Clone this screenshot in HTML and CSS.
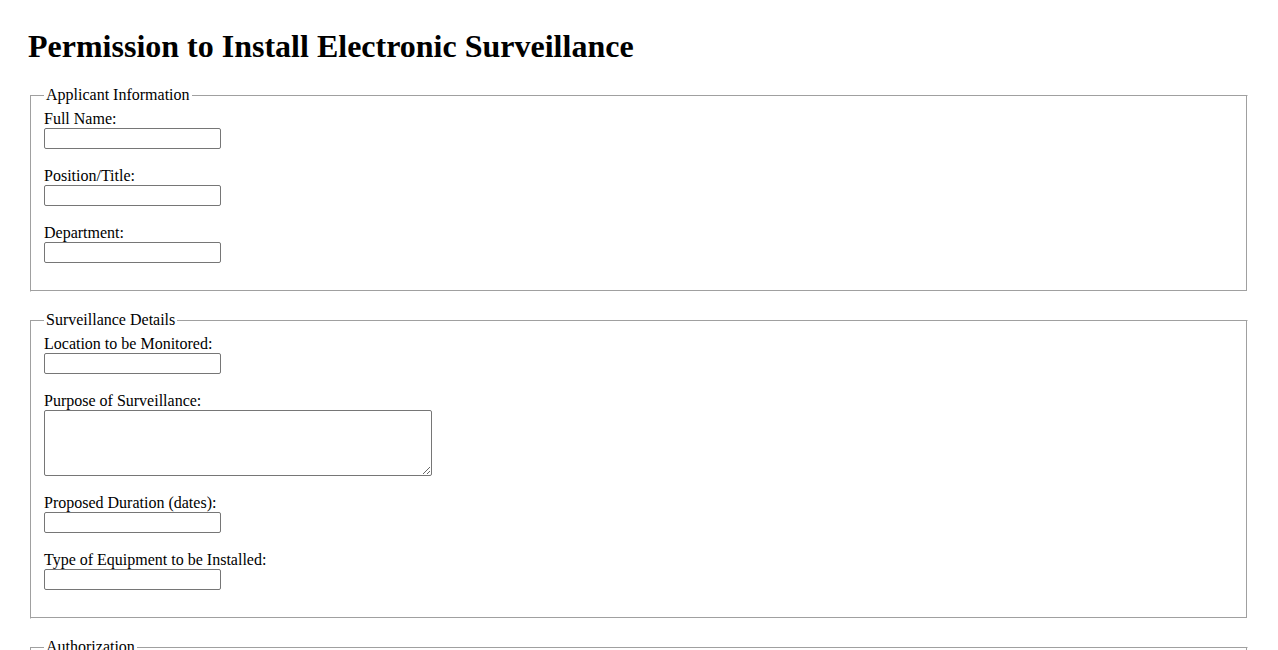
FILE: index.html
```html
<!DOCTYPE html>
<html lang="en">
<head>
<meta charset="utf-8">
<title>Permission to Install Electronic Surveillance</title>
<link rel="stylesheet" href="styles.css">
</head>
<body>
<div class="page">
  <h1 class="title">Permission to Install Electronic Surveillance</h1>
  <form class="form">
    <fieldset class="group">
      <legend class="group-legend">Applicant Information</legend>
      <div class="field">
        <label class="field-label" for="fullname">Full Name:</label>
        <input class="text-input" type="text" id="fullname">
      </div>
      <div class="field">
        <label class="field-label" for="position">Position/Title:</label>
        <input class="text-input" type="text" id="position">
      </div>
      <div class="field">
        <label class="field-label" for="department">Department:</label>
        <input class="text-input" type="text" id="department">
      </div>
    </fieldset>

    <fieldset class="group">
      <legend class="group-legend">Surveillance Details</legend>
      <div class="field">
        <label class="field-label" for="location">Location to be Monitored:</label>
        <input class="text-input" type="text" id="location">
      </div>
      <div class="field">
        <label class="field-label" for="purpose">Purpose of Surveillance:</label>
        <textarea class="text-area" id="purpose"></textarea>
      </div>
      <div class="field">
        <label class="field-label" for="duration">Proposed Duration (dates):</label>
        <input class="text-input" type="text" id="duration">
      </div>
      <div class="field">
        <label class="field-label" for="equipment">Type of Equipment to be Installed:</label>
        <input class="text-input" type="text" id="equipment">
      </div>
    </fieldset>

    <fieldset class="group">
      <legend class="group-legend">Authorization</legend>
      <div class="field">
        <label class="field-label" for="approver">Approved By:</label>
        <input class="text-input" type="text" id="approver">
      </div>
      <div class="field">
        <label class="field-label" for="signature">Signature:</label>
        <input class="text-input" type="text" id="signature">
      </div>
      <div class="field">
        <label class="field-label" for="date">Date:</label>
        <input class="text-input" type="text" id="date">
      </div>
    </fieldset>
  </form>
</div>
</body>
</html>
```

FILE: styles.css
```css
html, body {
  margin: 0;
  padding: 0;
  background: #ffffff;
}

body {
  font-family: "Liberation Serif", "Times New Roman", serif;
  font-size: 16px;
  color: #000000;
}

.page {
  padding: 0 28px;
}

.title {
  font-size: 32px;
  font-weight: bold;
  margin: 28px 0 21px;
  line-height: normal;
}

.form {
  margin: 0;
}

.group {
  margin: 0 2px 19px;
  padding: 6px 13px 10px;
  border: 1px solid;
  border-color: #a0a0a0 #ffffff #ffffff #a0a0a0;
  box-shadow: inset -1px -1px 0 #a0a0a0;
}

.group-legend {
  padding: 0 2px;
  font-size: 16px;
}

.field {
  margin-bottom: 18px;
}

.field-label {
  display: block;
  line-height: normal;
}

.text-input {
  display: block;
  box-sizing: border-box;
  width: 177px;
  height: 21px;
  margin: 0;
  padding: 1px 2px;
  border: 1px solid #767676;
  border-radius: 2px;
  background: #ffffff;
  font-family: "Liberation Sans", Arial, sans-serif;
  font-size: 13.33px;
}

.text-area {
  display: block;
  box-sizing: border-box;
  width: 388px;
  height: 66px;
  margin: 0;
  padding: 2px;
  border: 1px solid #767676;
  border-radius: 2px;
  background: #ffffff;
  font-family: "Liberation Mono", monospace;
  font-size: 13.33px;
}
```
